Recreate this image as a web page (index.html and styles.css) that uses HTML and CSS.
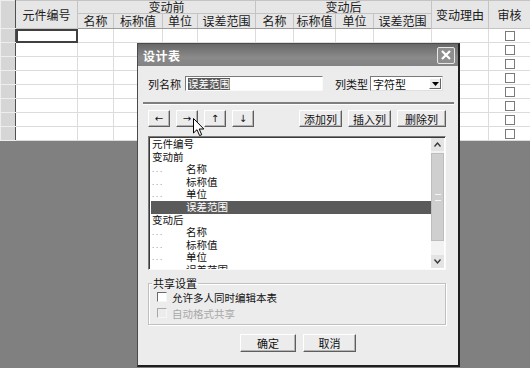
FILE: index.html
```html
<!DOCTYPE html>
<html lang="zh">
<head>
<meta charset="utf-8">
<title>设计表</title>
<link rel="stylesheet" href="styles.css">
</head>
<body>
<div class="sheet">
  <table class="grid">
    <colgroup>
      <col class="c-rh"><col class="c-id"><col class="c-a"><col class="c-b"><col class="c-c"><col class="c-d"><col class="c-e"><col class="c-f"><col class="c-g"><col class="c-h"><col class="c-i"><col class="c-j">
    </colgroup>
    <thead>
      <tr class="h1">
        <th class="rh" rowspan="2"></th>
        <th rowspan="2">元件编号</th>
        <th colspan="4">变动前</th>
        <th colspan="4">变动后</th>
        <th rowspan="2">变动理由</th>
        <th rowspan="2">审核</th>
      </tr>
      <tr class="h2">
        <th>名称</th><th>标称值</th><th>单位</th><th>误差范围</th>
        <th>名称</th><th>标称值</th><th>单位</th><th>误差范围</th>
      </tr>
    </thead>
    <tbody>
      <tr><td class="rh"></td><td class="sel"></td><td></td><td></td><td></td><td></td><td></td><td></td><td></td><td></td><td></td><td><span class="cb"></span></td></tr>
      <tr><td class="rh"></td><td></td><td></td><td></td><td></td><td></td><td></td><td></td><td></td><td></td><td></td><td><span class="cb"></span></td></tr>
      <tr><td class="rh"></td><td></td><td></td><td></td><td></td><td></td><td></td><td></td><td></td><td></td><td></td><td><span class="cb"></span></td></tr>
      <tr><td class="rh"></td><td></td><td></td><td></td><td></td><td></td><td></td><td></td><td></td><td></td><td></td><td><span class="cb"></span></td></tr>
      <tr><td class="rh"></td><td></td><td></td><td></td><td></td><td></td><td></td><td></td><td></td><td></td><td></td><td><span class="cb"></span></td></tr>
      <tr><td class="rh"></td><td></td><td></td><td></td><td></td><td></td><td></td><td></td><td></td><td></td><td></td><td><span class="cb"></span></td></tr>
      <tr><td class="rh"></td><td></td><td></td><td></td><td></td><td></td><td></td><td></td><td></td><td></td><td></td><td><span class="cb"></span></td></tr>
      <tr><td class="rh"></td><td></td><td></td><td></td><td></td><td></td><td></td><td></td><td></td><td></td><td></td><td><span class="cb"></span></td></tr>
    </tbody>
  </table>
</div>

<div class="dialog">
  <div class="titlebar">
    <span class="title">设计表</span>
    <span class="close">
      <svg width="12" height="12" viewBox="0 0 12 12"><path d="M2 2 L10 10 M10 2 L2 10" stroke="#fff" stroke-width="2.2" fill="none"/></svg>
    </span>
  </div>
  <div class="body">
    <div class="row1">
      <span class="lbl">列名称</span>
      <span class="input"><span class="seltext">误差范围</span></span>
      <span class="lbl lbl2">列类型</span>
      <span class="select"><span class="selval">字符型</span><span class="dd"><svg width="7" height="4" viewBox="0 0 7 4"><path d="M0 0 H7 L3.5 4 Z" fill="#000"/></svg></span></span>
    </div>
    <div class="sep"></div>
    <div class="toolbar">
      <div class="arrows">
        <span class="btn sq">←</span>
        <span class="btn sq">→</span>
        <span class="btn sq">↑</span>
        <span class="btn sq">↓</span>
      </div>
      <div class="actions">
        <span class="btn act">添加列</span>
        <span class="btn act">插入列</span>
        <span class="btn act wide">删除列</span>
      </div>
    </div>
    <div class="listbox">
      <div class="items">
        <div class="it">元件编号</div>
        <div class="it">变动前</div>
        <div class="it child"><span class="dots">. . .</span><span>名称</span></div>
        <div class="it child"><span class="dots">. . .</span><span>标称值</span></div>
        <div class="it child"><span class="dots">. . .</span><span>单位</span></div>
        <div class="it child on"><span class="dots">. . .</span><span>误差范围</span></div>
        <div class="it">变动后</div>
        <div class="it child"><span class="dots">. . .</span><span>名称</span></div>
        <div class="it child"><span class="dots">. . .</span><span>标称值</span></div>
        <div class="it child"><span class="dots">. . .</span><span>单位</span></div>
        <div class="it child"><span class="dots">. . .</span><span>误差范围</span></div>
      </div>
      <div class="vscroll">
        <span class="sbtn"><svg width="7" height="5" viewBox="0 0 7 5"><path d="M0.5 4.5 L3.5 1 L6.5 4.5" stroke="#333" stroke-width="1.3" fill="none"/></svg></span>
        <span class="track"><span class="thumb"><span class="grip"></span></span></span>
        <span class="sbtn"><svg width="7" height="5" viewBox="0 0 7 5"><path d="M0.5 0.5 L3.5 4 L6.5 0.5" stroke="#333" stroke-width="1.3" fill="none"/></svg></span>
      </div>
    </div>
    <fieldset class="group">
      <legend>共享设置</legend>
      <label class="chk"><span class="box"></span>允许多人同时编辑本表</label>
      <label class="chk dis"><span class="box"></span>自动格式共享</label>
    </fieldset>
    <div class="footer">
      <span class="btn ok">确定</span>
      <span class="btn cancel">取消</span>
    </div>
  </div>
</div>

<svg class="cursor" width="12" height="19" viewBox="0 0 12 19">
  <path d="M0.5 0.5 L0.5 15 L4 11.7 L6.6 17.6 L8.7 16.7 L6.2 11 L10.8 11 Z" fill="#fff" stroke="#000" stroke-width="1"/>
</svg>
</body>
</html>
```

FILE: styles.css
```css
html, body {
  margin: 0;
  padding: 0;
}
body {
  width: 530px;
  height: 368px;
  overflow: hidden;
  background: #808080;
  position: relative;
  font-family: "Noto Sans CJK SC", "Noto Sans", sans-serif;
  color: #111;
}

/* ---------- spreadsheet ---------- */
.sheet {
  width: 530px;
}
.grid {
  width: 530px;
  table-layout: fixed;
  border-collapse: collapse;
  background: #fff;
  border-bottom: 1px solid #2a2a2a;
}
.c-rh { width: 15px; }
.c-id { width: 62px; }
.c-a { width: 36px; }
.c-b { width: 49px; }
.c-c { width: 35px; }
.c-d { width: 58px; }
.c-e { width: 38px; }
.c-f { width: 42px; }
.c-g { width: 38px; }
.c-h { width: 58px; }
.c-i { width: 57px; }
.c-j { width: 42px; }

.grid th {
  background: #e6e6e6;
  border: 1px solid #c4c4c4;
  font-weight: normal;
  font-size: 12px;
  line-height: 12px;
  padding: 0;
  text-align: center;
  color: #1a1a1a;
  overflow: hidden;
  white-space: nowrap;
}
.grid .h1 { height: 13px; }
.grid .h2 { height: 15px; }
.grid .h2 th { border-bottom-color: #9a9a9a; }
.grid td {
  border: 1px solid #dcdcdc;
  height: 13px;
  padding: 0;
  text-align: center;
  line-height: 0;
}
.grid .rh {
  background: #d6d6d6;
  border-color: #eeeeee;
  border-right: 1px solid #505050;
}
.grid td.sel {
  outline: 2px solid #404040;
  outline-offset: -2px;
}
.cb {
  display: inline-block;
  width: 8px;
  height: 8px;
  border: 1px solid #7a7a7a;
  background: #fff;
  vertical-align: middle;
}

/* ---------- dialog ---------- */
.dialog {
  position: absolute;
  left: 137px;
  top: 43px;
  width: 323px;
  height: 324px;
  box-sizing: border-box;
  background: #ececec;
  border: 1px solid #4a4a4a;
  border-right: 2px solid #1e1e1e;
  border-bottom: 2px solid #1e1e1e;
  display: flex;
  flex-direction: column;
  font-size: 11px;
}
.titlebar {
  height: 22px;
  flex: none;
  display: flex;
  align-items: center;
  justify-content: space-between;
  padding: 0 3px 0 5px;
  background: linear-gradient(#676767, #8a8a8a 60%, #848484);
}
.title {
  color: #fff;
  font-size: 12px;
  font-weight: bold;
  letter-spacing: 0.5px;
}
.close {
  width: 16px;
  height: 15px;
  border: 1px solid #e8e8e8;
  border-radius: 2px;
  background: #8e8e8e;
  display: flex;
  align-items: center;
  justify-content: center;
}

.body {
  flex: 1;
  display: flex;
  flex-direction: column;
  padding: 10px 12px 0 10px;
}

.row1 {
  display: flex;
  align-items: center;
  height: 15px;
}
.lbl {
  width: 37px;
  white-space: nowrap;
}
.lbl2 {
  margin-left: 12px;
  width: 35px;
}
.input {
  width: 138px;
  height: 15px;
  box-sizing: border-box;
  background: #fff;
  border-top: 1px solid #7a7a7a;
  border-left: 1px solid #7a7a7a;
  border-right: 1px solid #fafafa;
  border-bottom: 1px solid #fafafa;
  display: flex;
  align-items: center;
  padding-left: 2px;
}
.seltext {
  background: #5a5a5a;
  color: #fff;
  font-size: 10.5px;
  line-height: 12px;
}
.select {
  width: 73px;
  height: 15px;
  box-sizing: border-box;
  background: #fff;
  border: 1px solid #7a7a7a;
  border-right-color: #e0e0e0;
  border-bottom-color: #e0e0e0;
  display: flex;
  align-items: center;
  justify-content: space-between;
  padding-left: 2px;
}
.selval { line-height: 12px; }
.dd {
  width: 12px;
  height: 11px;
  margin-right: 1px;
  background: #ececec;
  border: 1px solid #fff;
  border-right-color: #666;
  border-bottom-color: #666;
  box-sizing: border-box;
  display: flex;
  align-items: center;
  justify-content: center;
}

.sep {
  margin: 11px -8px 0 -5px;
  height: 0;
  border-top: 2px solid #7e7e7e;
  border-bottom: 1px solid #ffffff;
}

.toolbar {
  margin-top: 5px;
  height: 17px;
  display: flex;
  justify-content: space-between;
  padding-right: 0;
}
.arrows, .actions {
  display: flex;
  gap: 6px;
}
.btn {
  box-sizing: border-box;
  display: flex;
  align-items: center;
  justify-content: center;
  background: #ececec;
  border-top: 1px solid #ffffff;
  border-left: 1px solid #ffffff;
  border-right: 1px solid #5e5e5e;
  border-bottom: 1px solid #5e5e5e;
  box-shadow: inset -1px -1px 0 #b4b4b4;
  font-size: 11px;
  color: #111;
  white-space: nowrap;
}
.sq {
  width: 22px;
  height: 17px;
  font-family: "DejaVu Sans", sans-serif;
  font-size: 10px;
}
.act {
  width: 43px;
  height: 17px;
}
.act.wide { width: 49px; }

.listbox {
  margin-top: 9px;
  height: 134px;
  box-sizing: border-box;
  background: #fff;
  border-top: 1px solid #7a7a7a;
  border-left: 1px solid #7a7a7a;
  border-right: 1px solid #fafafa;
  border-bottom: 1px solid #fafafa;
  box-shadow: inset 1px 1px 0 #3a3a3a;
  display: flex;
  overflow: hidden;
}
.items {
  flex: 1;
  padding: 1px 0 0 2px;
  overflow: hidden;
}
.it {
  height: 12.6px;
  line-height: 12.6px;
  font-size: 10.5px;
  white-space: nowrap;
  display: flex;
  padding-left: 1px;
  color: #111;
}
.dots {
  width: 34px;
  color: #9a9a9a;
  font-size: 8px;
  letter-spacing: 0;
}
.it.on {
  background: #5a5a5a;
  color: #fff;
}
.it.on .dots { color: #5a5a5a; }

.vscroll {
  width: 13px;
  display: flex;
  flex-direction: column;
  background: #f2f2f2;
  margin: 1px 1px 1px 0;
}
.sbtn {
  height: 13px;
  flex: none;
  display: flex;
  align-items: center;
  justify-content: center;
  background: #e4e4e4;
}
.track {
  flex: 1;
  display: flex;
  flex-direction: column;
  padding-top: 2px;
}
.thumb {
  height: 86px;
  background: #cfcfcf;
  border: 1px solid #bdbdbd;
  display: flex;
  align-items: center;
  justify-content: center;
}
.grip {
  width: 6px;
  height: 5px;
  border-top: 1px solid #f4f4f4;
  border-bottom: 1px solid #f4f4f4;
}

.group {
  margin: 8px 0 0 0;
  padding: 2px 0 0 8px;
  height: 47px;
  box-sizing: border-box;
  border: 1px solid #c0c0c0;
  box-shadow: 1px 1px 0 #fff, inset 1px 1px 0 #fff;
  display: flex;
  flex-direction: column;
  gap: 4px;
  min-width: 0;
}
.group legend {
  padding: 0 1px;
  margin-left: -5px;
  font-size: 11px;
  line-height: 11px;
}
.chk {
  display: flex;
  align-items: center;
  gap: 5px;
  height: 12px;
  font-size: 10.5px;
  white-space: nowrap;
}
.box {
  width: 10px;
  height: 10px;
  box-sizing: border-box;
  background: #fff;
  border-top: 1px solid #6a6a6a;
  border-left: 1px solid #6a6a6a;
  border-right: 1px solid #f6f6f6;
  border-bottom: 1px solid #f6f6f6;
}
.chk.dis { color: #a8a8a8; }
.chk.dis .box {
  background: #ececec;
  border-top-color: #a8a8a8;
  border-left-color: #a8a8a8;
}

.footer {
  margin-top: 9px;
  display: flex;
  justify-content: center;
  gap: 7px;
  padding-left: 2px;
}
.ok {
  width: 56px;
  height: 18px;
}
.cancel {
  width: 53px;
  height: 18px;
}

.cursor {
  position: absolute;
  left: 193px;
  top: 118px;
}
```
